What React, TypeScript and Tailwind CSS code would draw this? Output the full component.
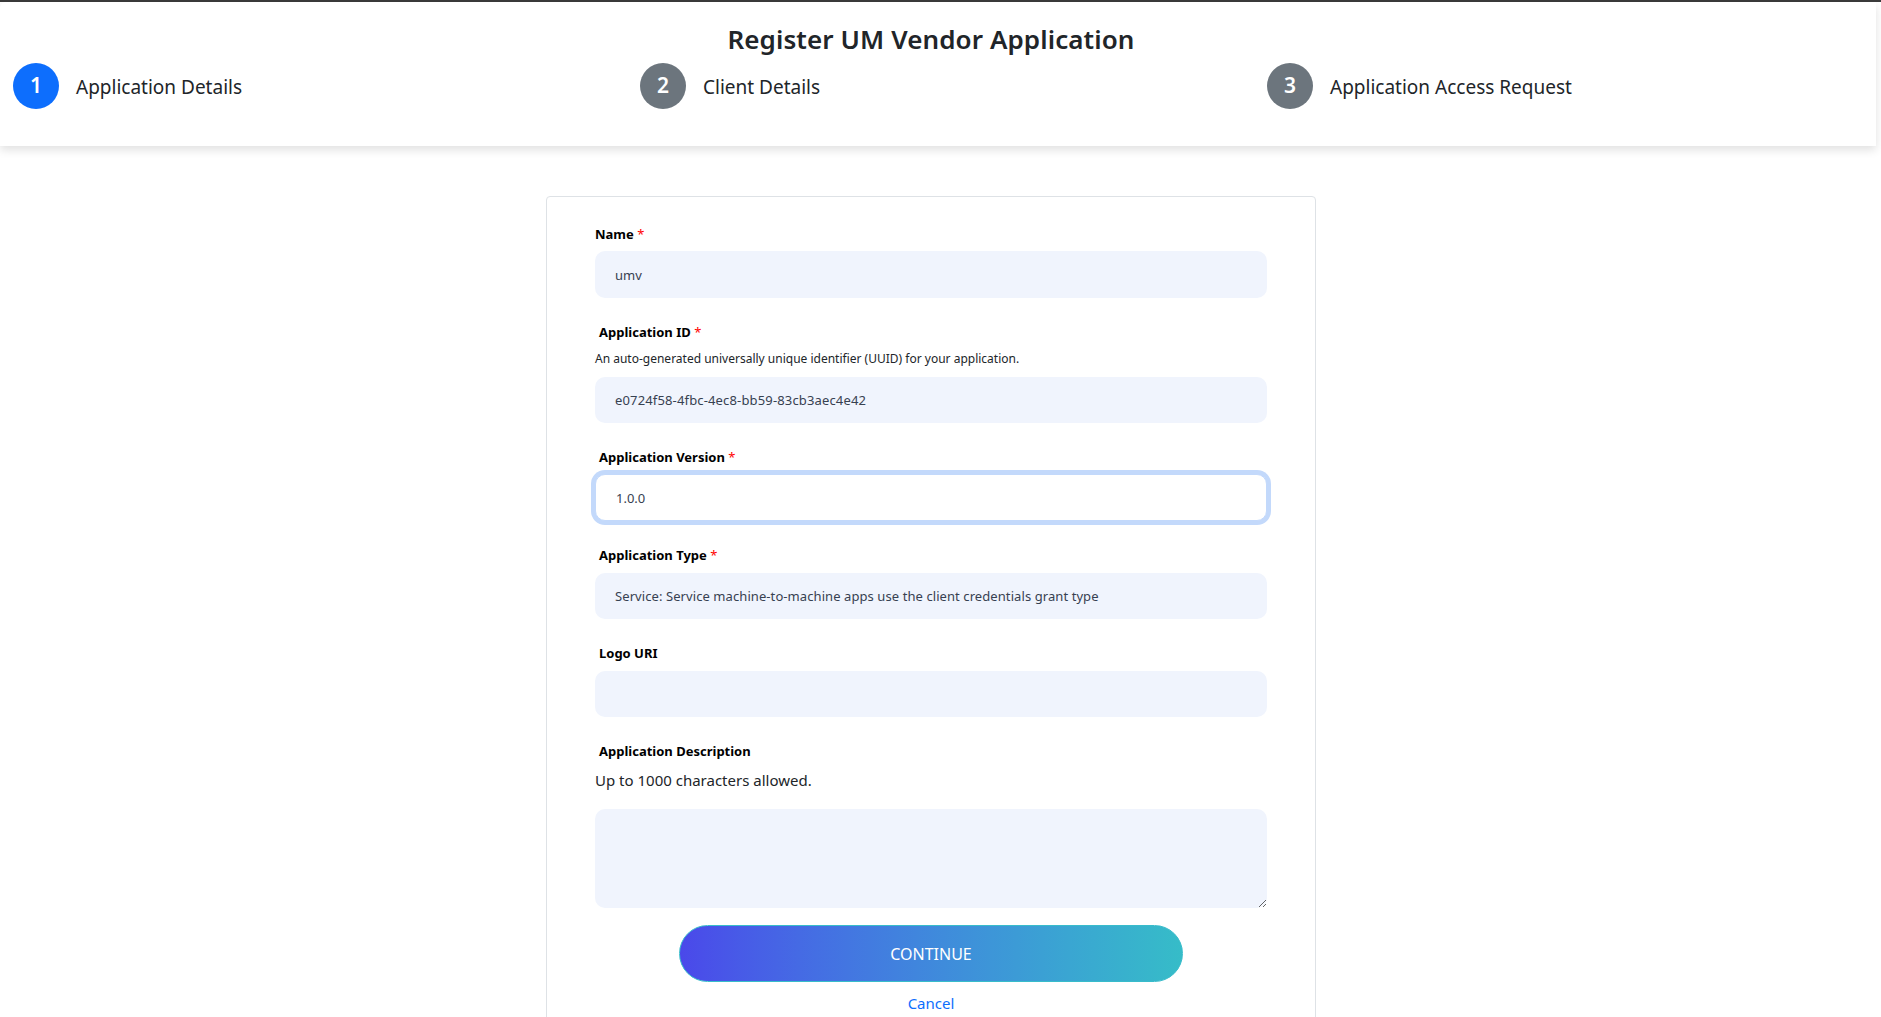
import React from 'react'

const steps = [
  { n: 1, label: 'Application Details', active: true },
  { n: 2, label: 'Client Details', active: false },
  { n: 3, label: 'Application Access Request', active: false },
]

function Label({ text, required, indent = true }: { text: string; required?: boolean; indent?: boolean }) {
  return (
    <label className={`block text-[13px] leading-4 font-bold text-black ${indent ? 'pl-1' : ''}`}>
      {text}
      {required && <span className="text-[#ff0000] font-normal"> *</span>}
    </label>
  )
}

export default function App() {
  return (
    <div className="min-h-screen bg-white font-['Noto_Sans',sans-serif] text-[#212529] overflow-hidden">
      <div className="h-[2px] bg-[#3b3b3b]" />

      {/* Stepper header */}
      <header className="mr-[5px] bg-white rounded-tl-md shadow-[0_4px_10px_rgba(0,0,0,0.12)] pt-[19px] pb-[37px]">
        <h1 className="pr-[14px] text-center text-[26px] tracking-[0.1px] leading-9 font-semibold text-[#212529]">
          Register UM Vendor Application
        </h1>
        <div className="grid grid-cols-[627px_627px_622px] mt-[6px]">
          {steps.map((s) => (
            <div key={s.n} className="flex items-center pl-[13px]">
              <div
                className={`w-[46px] h-[46px] rounded-full flex items-center justify-center text-white text-[21px] font-semibold ${
                  s.active ? 'bg-[#0d6efd]' : 'bg-[#6c757d]'
                }`}
              >
                {s.n}
              </div>
              <span className="ml-[17px] pt-[2px] text-[19px] text-[#212529]">{s.label}</span>
            </div>
          ))}
        </div>
      </header>

      {/* Form */}
      <main className="pr-[19px] pt-[50px] flex justify-center">
        <div className="w-[770px] border border-[#dee2e6] rounded bg-white px-12 pt-[29px] pb-10">
          <Label text="Name" required indent={false} />
          <input
            readOnly
            value="umv"
            className="mt-[9px] w-full h-[47px] rounded-[10px] bg-[#f0f4fd] px-5 text-[13px] text-[#374151] outline-none"
          />

          <div className="mt-[26px]">
            <Label text="Application ID" required />
            <p className="mt-[11px] text-[12px] leading-4 text-[#212529]">
              An auto-generated universally unique identifier (UUID) for your application.
            </p>
            <input
              readOnly
              value="e0724f58-4fbc-4ec8-bb59-83cb3aec4e42"
              className="mt-[10px] w-full h-[46px] rounded-[10px] bg-[#f0f4fd] px-5 text-[13px] tracking-[0.15px] text-[#374151] outline-none"
            />
          </div>

          <div className="mt-[26px]">
            <Label text="Application Version" required />
            <input
              readOnly
              value="1.0.0"
              className="mt-[9px] w-full h-[47px] rounded-[10px] bg-white border border-[#c3d9fb] shadow-[0_0_0_4px_#c3d9fb] px-5 text-[13px] text-[#374151] outline-none"
            />
          </div>

          <div className="mt-[26px]">
            <Label text="Application Type" required />
            <input
              readOnly
              value="Service: Service machine-to-machine apps use the client credentials grant type"
              className="mt-[10px] w-full h-[46px] rounded-[10px] bg-[#f0f4fd] px-5 text-[13px] tracking-[0.08px] text-[#374151] outline-none"
            />
          </div>

          <div className="mt-[26px]">
            <Label text="Logo URI" />
            <input
              readOnly
              value=""
              className="mt-[10px] w-full h-[46px] rounded-[10px] bg-[#f0f4fd] px-5 text-[13px] text-[#374151] outline-none"
            />
          </div>

          <div className="mt-[26px]">
            <Label text="Application Description" />
            <p className="mt-[9px] text-[15px] leading-6 text-[#212529]">Up to 1000 characters allowed.</p>
            <textarea
              readOnly
              className="block mt-[17px] w-full h-[99px] rounded-[10px] bg-[#f0f4fd] px-5 py-3 text-[13px] text-[#374151] outline-none"
            />
          </div>

          <div className="mt-[17px] flex justify-center">
            <button className="w-[504px] h-[57px] rounded-full border border-[#38bccb] bg-gradient-to-r from-[#4a48ea] to-[#36bcc8] text-white text-[16px]">
              CONTINUE
            </button>
          </div>
          <div className="mt-[9px] text-center">
            <a href="#" className="text-[15px] leading-6 text-[#0d6efd]">
              Cancel
            </a>
          </div>
        </div>
      </main>
    </div>
  )
}
